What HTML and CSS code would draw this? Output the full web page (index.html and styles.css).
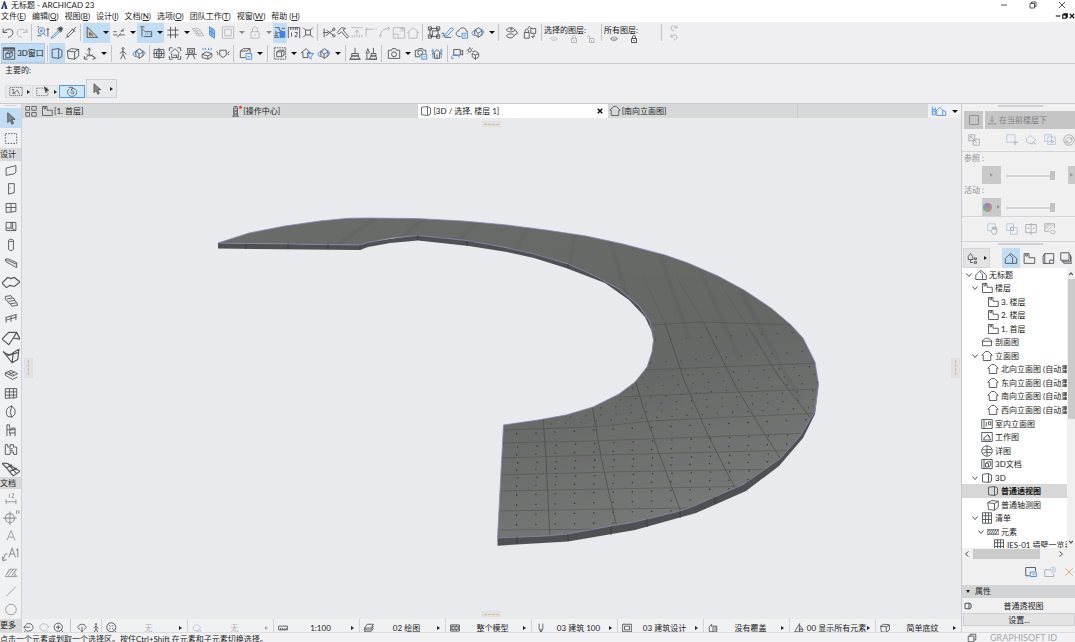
FILE: index.html
```html
<!DOCTYPE html>
<html lang="zh-CN">
<head>
<meta charset="utf-8">
<title>无标题 - ARCHICAD 23</title>
<link rel="stylesheet" href="styles.css">
</head>
<body>
<svg class="defs" aria-hidden="true">
<symbol id="logo" viewBox="0 0 16 16"><path d="M2 16 8 0l2 0 5 16h-5L8 6 6 16z" fill="#253a78" stroke="none"/></symbol>
<symbol id="undo" viewBox="0 0 16 16"><path d="M2 3v5h5M2 8c3-5 12-6 12 0 0 3-2 5-6 6"/></symbol>
<symbol id="redo" viewBox="0 0 16 16"><path d="M14 3v5H9M14 8C11 3 2 2 2 8c0 3 2 5 6 6"/></symbol>
<symbol id="find" viewBox="0 0 16 16"><circle class="b" cx="6" cy="6" r="4"/><circle cx="6" cy="6" r="1"/><path class="b" d="m9 9 2 3"/><path d="M1 1h2M1 12h5M14 13V3m-2 2 2-2 1 2"/></symbol>
<symbol id="dropper" viewBox="0 0 16 16"><path d="m9 3 4 4 2-4-2-2zM8 4l4 4" fill="#555"/><path class="b" d="m9 6-7 7-1 2 3-1 7-7"/></symbol>
<symbol id="syringe" viewBox="0 0 16 16"><path d="m9 3 4 4M11 5l3-4M4 14l8-8-2-2-7 7z"/><path class="b" d="m1 15 3-3"/></symbol>
<symbol id="setsquare" viewBox="0 0 16 16"><path d="M2 1v13h13zM5 8v3h4z" fill="#d9ba8c" fill-opacity=".6"/></symbol>
<symbol id="guides" viewBox="0 0 16 16"><path d="M1 11h5m3 0h6M6 14l4-5M11 7l3-4M1 7h4m5-1h4"/></symbol>
<symbol id="coords" viewBox="0 0 16 16"><path d="M1 1h5M3 1v12M5 13h10V7H7L4 4M7 10h1m2 0h1m2 0h1"/></symbol>
<symbol id="grid" viewBox="0 0 16 16"><path d="M5 1v14M11 1v14M1 5h14M1 11h14"/></symbol>
<symbol id="planes" viewBox="0 0 16 16"><path d="M1 3h8l6 9H7zM4 3l6 9M3 6h8M5 9h8"/></symbol>
<symbol id="bplane" viewBox="0 0 16 16"><path class="b" d="m5 1 6 4v10l-6-4zM8 3v10M5 6l6 4" fill="#9cc6f0"/></symbol>
<symbol id="frame" viewBox="0 0 16 16"><path d="M1 1h14v14H1zM4 4h8v8H4z"/></symbol>
<symbol id="lock" viewBox="0 0 16 16"><path d="M3 7h10v8H3zM5 7V4c0-4 6-4 6 0v3M8 10v2"/></symbol>
<symbol id="unlock" viewBox="0 0 16 16"><path d="M5 7h9v8H5zM5 7V4C5 0 1 1 1 4m8 6v3"/></symbol>
<symbol id="gravity" viewBox="0 0 16 16"><path d="M2 2h5v3l7 3M1 14h6M3 6v6M3 9l5-1"/><path d="M8 7h6v7H8z" class="bf"/><path d="M1 12h5M10 3h4"/></symbol>
<symbol id="ruler" viewBox="0 0 16 16"><path d="M1 15V2h14v13M4 2v3m3-3v3m3-3v3m2-3v3M5 8v5M9 8h3v2l-3 3h3"/></symbol>
<symbol id="cross" viewBox="0 0 16 16"><path d="M5 5h6v6H5zM2 2l3 3m6 0 3-3M2 14l3-3m6 0 3 3"/></symbol>
<symbol id="scissor" viewBox="0 0 16 16"><path d="M1 8h6M2 3v11M4 12l9-7M5 5l8 6"/><circle cx="14" cy="4" r="1.5"/><circle cx="14" cy="12" r="1.5"/></symbol>
<symbol id="hammer" viewBox="0 0 16 16"><path d="m1 8 5-6 5 1-3 2 7 8-2 2-7-8-3 3z"/></symbol>
<symbol id="level" viewBox="0 0 16 16"><path d="M1 2h14M8 14V5M5 8l3-3 3 3M2 14v-3m3 3v-3m6 3v-3m3 3v-3"/></symbol>
<symbol id="corner" viewBox="0 0 16 16"><path d="M2 13V4h10M1 4h2V2M14 4h1"/></symbol>
<symbol id="arc" viewBox="0 0 16 16"><path d="M2 14C2 7 6 3 13 3M11 1l3 2-3 3M1 12h3"/></symbol>
<symbol id="resize" viewBox="0 0 16 16"><path d="M1 2h14v13H1zM1 10h6v5M9 7l4-4M9 3h4v4"/></symbol>
<symbol id="house" viewBox="0 0 16 16"><path d="m1 8 7-6 7 6h-2v7H3V8z"/></symbol>
<symbol id="group" viewBox="0 0 16 16"><path d="M3 3h10v10H3zM6 6h7M6 6v7M1 1h4v4H1zM11 1h4v4h-4zM1 11h4v4H1zM11 11h4v4h-4z"/></symbol>
<symbol id="edit" viewBox="0 0 16 16"><path d="m4 11 8-9 3 2-8 8-4 1z" class="b"/><path d="M1 13c4-4 1-6-1-3m4 4h8"/></symbol>
<symbol id="cloud" viewBox="0 0 16 16"><path d="M6 13C-1 13 0 6 4 6c1-5 9-5 9 0 2 0 2 1 2 2"/><path class="b" d="M8 9h7v6H8zM10 12h3"/></symbol>
<symbol id="orbit" viewBox="0 0 16 16"><path d="m4 5 5-3 4 4v5l-5 3-4-4zM4 5l4 4v5m0-5 5-3"/><path class="b" d="M5 12C-2 11 0 5 7 5m4 6c7-2 4-7-1-7"/></symbol>
<symbol id="eyes" viewBox="0 0 16 16"><path d="M1 5c3-4 8-4 11 0-3 3-8 3-11 0M1 12c3-3 8-3 10 0-3 4-8 3-10 0m11-7 3 4-4 2"/><circle cx="7" cy="4" r="1"/></symbol>
<symbol id="locks" viewBox="0 0 16 16"><path d="M1 8h6v7H1zM2 8V6c0-3 4-3 4 0v2M9 3h6v6H9zM9 3c0-3-4-3-3 0m7 7v3h-3m2 2-2-2"/></symbol>
<symbol id="eye" viewBox="0 0 16 16"><path d="M1 7c3-4 11-4 14 0-3 6-11 6-14 0zM2 7c3 2 9 2 12 0"/></symbol>
<symbol id="win3d" viewBox="0 0 16 16"><path d="M1 1h14v14H1zM1 4h14M4 8l3-2h5v5l-3 2H4zM4 8h5v5M9 8l3-2"/><path d="M1 2h14" stroke-width="2"/></symbol>
<symbol id="persp" viewBox="0 0 16 16"><path d="m2 3 8-1v12l-8-1zM10 2l4 2v8l-4 2"/></symbol>
<symbol id="cube" viewBox="0 0 16 16"><path d="m1 5 5-3 9 1v8l-5 4-8-1zm0 0 9 1v9m0-9 5-3"/></symbol>
<symbol id="axes" viewBox="0 0 16 16"><path d="M7 2v7l-5 5m5-5 7 4M5 4l2-3 2 3M1 11v4h4m7-4 3 3-4 1M3 8c2 3 6 4 9 1"/></symbol>
<symbol id="walk" viewBox="0 0 16 16"><circle cx="8" cy="2" r="1.2"/><path d="M8 4v5l3 6M8 9l-3 6M8 5 4 8m4-3 4 4"/></symbol>
<symbol id="sect" viewBox="0 0 16 16"><path d="M2 3h12v10H2zM8 1v14M1 8h14M5 5h6v6H5z"/></symbol>
<symbol id="homebox" viewBox="0 0 16 16"><path d="M1 5V1h4m6 0h4v4m0 6v4h-4m-6 0H1v-4M2 8l6-6 6 6M4 8v5h8V8M6 10h4v3"/></symbol>
<symbol id="front" viewBox="0 0 16 16"><path d="M3 2h10M4 2v7h8V2M1 9h14M6 9l-3 6m7-6 3 6M6 4h4v3H6z"/></symbol>
<symbol id="sunbox" viewBox="0 0 16 16"><path class="b" d="M3 1v3m3-3v3m4-3v3m3-3v3"/><path d="m2 9 5-3 7 2-5 3zM2 9v4l7 2 5-3V8M9 11v4"/></symbol>
<symbol id="sides" viewBox="0 0 16 16"><path d="M4 4h8v6l-4 3-4-3zM0 5l2 3-1 2m15-5-2 3 1 2"/></symbol>
<symbol id="savebox" viewBox="0 0 16 16"><path d="m1 5 4-3h8v5M1 5v8h6M1 5h8l4-3"/><path class="b" d="M8 8h7v7H8zM10 12h3"/></symbol>
<symbol id="marqbox" viewBox="0 0 16 16"><path d="M1 1h14v14H1z" stroke-dasharray="2 1"/><path d="m4 6 3-2h6v6l-3 2H4zm0 0h6v6m0-6 3-2"/></symbol>
<symbol id="filter" viewBox="0 0 16 16"><path d="m1 7 6-5 5 5H9v6H3V7z"/><path class="b" d="M8 8h8l-3 4v3l-2-2z"/></symbol>
<symbol id="brush" viewBox="0 0 16 16"><path d="M8 1v7M4 8h8v3H4zM2 15l2-4h8l2 4zM1 15h14"/></symbol>
<symbol id="brushes" viewBox="0 0 16 16"><path d="M11 1v7M8 8h6v3H8zM6 15l2-4h6l1 4zM4 2l2 5-4 1zM1 15h14M3 9v6"/></symbol>
<symbol id="camera" viewBox="0 0 16 16"><path d="M1 4h4l1-2h4l1 2h4v10H1z"/><circle cx="8" cy="9" r="3"/></symbol>
<symbol id="camsave" viewBox="0 0 16 16"><path d="M7 12H1V4h3l1-2h5l1 2h3v4"/><circle cx="7" cy="7" r="3"/><path class="b" d="M9 9h6v6H9zM11 12h2"/></symbol>
<symbol id="bhouse" viewBox="0 0 16 16"><path class="b" d="M3 2v12M13 2v12M1 5h2m10 0h2"/><path d="m2 9 6-6 6 6M5 7v7h6V7M8 9v5"/></symbol>
<symbol id="video" viewBox="0 0 16 16"><path d="M4 3h8v7H4zM12 6l3-2v6l-3-2"/><path class="b" d="M1 13c0-4 9-4 10 0M1 14h3"/></symbol>
<symbol id="sunobj" viewBox="0 0 16 16"><circle cx="4" cy="4" r="2"/><path d="M4 0v1M0 4h1M8 1 7 2M1 8l1-1m5-1 4-1 4 3v4l-4 3-4-3V8l4 2 4-2m-4 2v5"/></symbol>
<symbol id="arrow" viewBox="0 0 16 16"><path d="M4 1v12l3-3 2 5 2-1-2-5h4z" fill="#888"/></symbol>
<symbol id="marq" viewBox="0 0 16 16"><path d="M1 2h14v12H1z" stroke-dasharray="2 1.5"/></symbol>
<symbol id="marqsel" viewBox="0 0 20 16"><path d="M1 3h16v11H1z" stroke-dasharray="2 1.5"/><path d="m12 1 6 5-3 1-1 3z" fill="#333"/></symbol>
<symbol id="infosel" viewBox="0 0 20 16"><path d="M1 2h18v12H1z" stroke-dasharray="2 1"/><path d="M6 5v6l6-5 3 6M5 11h4M4 5h3"/></symbol>
<symbol id="magnet" viewBox="0 0 16 16"><path d="M4 4c-5 4-2 11 4 11s9-6 5-10c-3-3-8 0-5 2l3 2c1 3-5 3-5-1M3 2l6 0-2 4"/></symbol>
<symbol id="quad" viewBox="0 0 16 16"><path d="M1 2h5v5H1zM9 2h6v5H9zM1 10h5v5H1zM9 10h6v5H9z"/></symbol>
<symbol id="plan" viewBox="0 0 16 16"><path d="M2 14V2h6v5h7v7zM4 2v3h2V2"/></symbol>
<symbol id="tower" viewBox="0 0 16 16"><path d="M4 4h7M5 2h5M5 4v11m5-11v11M3 15h9M5 6l5 4-5 4M10 6l-5 4 5 4"/><circle cx="14" cy="3" r="2" fill="#f04423" stroke="none"/></symbol>
<symbol id="elev" viewBox="0 0 16 16"><path d="M3 14V7H1l5-5h4l5 5h-2v7z"/></symbol>
<symbol id="bhouses" viewBox="0 0 20 16"><path class="b" d="M1 2v11h4V3M1 6h4M1 9h4M6 8l5-5 4 4v7H7V8m8-1 4 2v5h-4"/></symbol>
<symbol id="wall" viewBox="0 0 16 16"><path d="M2 5 14 2v8l-2 2-10 2z"/></symbol>
<symbol id="door" viewBox="0 0 16 16"><path d="M5 2h7v11l-7 2zM7 7v1"/></symbol>
<symbol id="window" viewBox="0 0 16 16"><path d="M2 3h12v10l-12 1zM8 3v11M2 8h12"/></symbol>
<symbol id="cornerwin" viewBox="0 0 16 16"><path d="M2 3h12v10H2zM8 3v7l6 3M2 10h6M10 3v7"/></symbol>
<symbol id="column" viewBox="0 0 16 16"><path d="M5 3v11c2 2 4 2 6 0V3M5 3c1-2 5-2 6 0-1 2-5 2-6 0"/></symbol>
<symbol id="beam" viewBox="0 0 16 16"><path d="m1 3 14 6v4L2 6zM1 3l3-1 11 5v2"/></symbol>
<symbol id="slab" viewBox="0 0 16 16"><path d="m0 9 5-5 3 1 3-1 5 4-5 4-4-1-3 2z"/></symbol>
<symbol id="stair" viewBox="0 0 16 16"><path d="m1 3 7-1 2 3 2 1 1 3 2 1 1 4-7 1-2-3-2-1-2-3-2-1zM3 6l7-1M5 9l7-1m-5 4 7-1"/></symbol>
<symbol id="rail" viewBox="0 0 16 16"><path d="M1 7l14-4M2 10l13-4M2 7v6m6-8v7m6-9v7"/></symbol>
<symbol id="roof" viewBox="0 0 16 16"><path d="m0 9 6-6h7l3 6-6-1-4 6zM13 3l-3 5"/></symbol>
<symbol id="shell" viewBox="0 0 16 16"><path d="M1 4c3 3 7 4 9 1l5-3-1 9-5 3zM9 14l1-9M4 8l10-3"/></symbol>
<symbol id="skylight" viewBox="0 0 16 16"><path d="m1 6 7-3 8 4-6 3zM1 9l9 5 6-3M4 4l8 5m-7-1 7-3M1 6v3"/></symbol>
<symbol id="curtain" viewBox="0 0 16 16"><path d="M1 2h14v11l-14 1zM6 2v12m5-12v12M1 6h14M1 10h14"/></symbol>
<symbol id="morph" viewBox="0 0 16 16"><path d="M7 2C2 3 1 10 4 14l5 1 4-4V6L9 1zM9 1 7 9l2 6"/></symbol>
<symbol id="chair" viewBox="0 0 16 16"><path d="M3 1h3l1 6H3zM3 7v8m4-8h6v4H6zM13 11v4M7 11v4M9 7V5h4v2"/></symbol>
<symbol id="zone" viewBox="0 0 16 16"><path d="M1 2h3v3h3V2h4v3h4v9h-4v-3h-4v3H1zM6 7h4M6 9h4"/></symbol>
<symbol id="mesh" viewBox="0 0 16 16"><path d="M0 4c4-1 6 0 8 2l8 5-6 4c-3-3-6-8-10-11M4 8l5-3m-2 6 6-3M5 4l8 9"/></symbol>
<symbol id="dim" viewBox="0 0 16 16"><path d="M1 12h14M2 9v6M14 9v6M6 2v5M9 2h2v2L9 7h3"/></symbol>
<symbol id="leveldim" viewBox="0 0 16 16"><circle cx="7" cy="9" r="4"/><path d="M7 3v12M1 9h12M13 2v3M15 2v3"/></symbol>
<symbol id="text" viewBox="0 0 16 16"><path d="M3 14 8 2l5 12M5 10h6"/></symbol>
<symbol id="labelt" viewBox="0 0 16 16"><path d="m1 13 2-5h2M0 10l1 4 3-1M6 11l3-8 3 8M7 8h4M14 3v8M13 5l1-2"/></symbol>
<symbol id="hatch" viewBox="0 0 16 16"><path d="m1 13 5-9h9l-3 4 3 5zM4 13l7-9M8 13l6-8M2 11l6-7M11 13l2-3"/></symbol>
<symbol id="line" viewBox="0 0 16 16"><path d="M2 14 14 2"/></symbol>
<symbol id="circle" viewBox="0 0 16 16"><circle cx="8" cy="8" r="6.5"/></symbol>
<symbol id="square" viewBox="0 0 16 16"><path d="M2 2h12v12H2z"/></symbol>
<symbol id="below" viewBox="0 0 16 16"><path d="M8 1v10M5 8l3 3 3-3M1 14h14"/></symbol>
<symbol id="swap" viewBox="0 0 16 16"><path d="M1 1h8v8H1zM7 7h8v8H7zM3 3l9 9M3 6V3h3"/></symbol>
<symbol id="move" viewBox="0 0 16 16"><path d="M9 11H1V1h11v6" class="b"/><path d="M12 8v7M9 11h7"/></symbol>
<symbol id="rotate" viewBox="0 0 16 16"><path class="b" d="m2 6 5-4 7 5-5 6-7-2z"/><path d="M12 10l2 4M7 13h4"/></symbol>
<symbol id="copy" viewBox="0 0 16 16"><path class="b" d="M1 1h9v9H1zM5 4h10v10H5z"/><path d="m9 8 4 2-4 2"/></symbol>
<symbol id="refresh" viewBox="0 0 16 16"><circle cx="8" cy="8" r="7"/><path d="M4 9c0-5 6-6 8-2M12 4v3H9m3 1c0 5-6 5-8 2m0 3v-3h3"/></symbol>
<symbol id="hand" viewBox="0 0 16 16"><path class="b" d="M5 10H1V1h10v3"/><path d="M7 9V6h2v3-4h2v4-3h2v6l-2 3H8l-3-4z"/></symbol>
<symbol id="twosq" viewBox="0 0 16 16"><path class="b" d="M1 1h9v9H1zM6 6h9v9H6z"/><path d="M6 6h4v4H6z"/></symbol>
<symbol id="split" viewBox="0 0 16 16"><path d="M1 2h14v11H1zM8 0v16M3 7h3m4 0h3"/></symbol>
<symbol id="veil" viewBox="0 0 16 16"><path d="M7 11H1V1h13v6M2 8l7-7M2 5l4-4m0 8 7-7M8 12c2-3 6-3 7 0-1 3-5 3-7 0"/></symbol>
<symbol id="mapnav" viewBox="0 0 16 16"><path d="M3 6l3-4 3 4v4H3zM6 10v4h3M11 8h3v2h-3zM11 13h3v2h-3z"/></symbol>
<symbol id="houses" viewBox="0 0 16 16"><path d="M1 14V8l5-5 4 4v7zM6 3l2-1 7 6v6h-5"/></symbol>
<symbol id="layout" viewBox="0 0 16 16"><path d="M4 2h11v12H4zM4 2 2 5v9h4M10 14v-4h5"/></symbol>
<symbol id="books" viewBox="0 0 16 16"><path d="M1 1h11v10H1zM3 11v2h11V4h-2M5 13v2h11V7h-2"/></symbol>
<symbol id="section" viewBox="0 0 16 16"><path d="M2 13V6l4-3h4l4 3v7zM1 7h14"/></symbol>
<symbol id="interior" viewBox="0 0 16 16"><path d="M1 2h14v12H1zM4 2v12M7 5v6M10 5h3v4h-3z"/></symbol>
<symbol id="worksheet" viewBox="0 0 16 16"><path d="M1 2h14v12H1zM4 12V9l5-4 3 3M3 12h10M9 5l4 7"/></symbol>
<symbol id="detail" viewBox="0 0 16 16"><circle cx="8" cy="8" r="7"/><path d="M8 1v14M8 6h6M8 10h6M2 6l6 1M3 11l5-2"/></symbol>
<symbol id="doc3d" viewBox="0 0 16 16"><path d="M1 2h14v12H1zM4 2v12M6 7l3-2h4v5l-3 2H6zm0 0h4v5"/></symbol>
<symbol id="schedule" viewBox="0 0 16 16"><path d="M2 1h12v14H2zM6 1v14m4-14v14M2 5h12M2 10h12"/></symbol>
<symbol id="elements" viewBox="0 0 16 16"><path d="M0 5h16v6H0zM2 11l4-6m-1 6 4-6m-1 6 4-6m-1 6 4-6M1 8l2-3"/></symbol>
<symbol id="savev" viewBox="0 0 16 16"><path d="M6 13H1V2h13v5"/><path class="b" d="M7 8h8v6H7zM10 11h3"/></symbol>
<symbol id="newf" viewBox="0 0 16 16"><path d="M1 5h7M1 5v9h12v-4"/><circle class="b" cx="12" cy="5" r="3.5"/><path class="b" d="M12 3v4m-2-2h4"/></symbol>
<symbol id="x" viewBox="0 0 16 16"><path d="m2 2 12 12M14 2 2 14"/></symbol>
<symbol id="min" viewBox="0 0 16 16"><path d="M2 8h12"/></symbol>
<symbol id="restore" viewBox="0 0 16 16"><path d="M2 5h9v9H2zM5 5V2h9v9h-3"/></symbol>
<symbol id="chev" viewBox="0 0 16 16"><path d="m3 5 5 6 5-6"/></symbol>
<symbol id="zoomin" viewBox="0 0 16 16"><circle cx="7" cy="7" r="5.5"/><path d="M7 4v6M4 7h6m1 4 4 4"/></symbol>
<symbol id="prevz" viewBox="0 0 16 16"><path d="M4 3c9-4 13 7 5 9-3 1-6-1-7-3M4 7H1l3-3M4 7h5M3 12l-2 3"/></symbol>
<symbol id="nextz" viewBox="0 0 16 16"><path d="M12 4C3-2-1 10 6 12c3 1 5-1 6-3M12 7h3l-3-3m0 8 3 3"/></symbol>
<symbol id="orb" viewBox="0 0 16 16"><path d="M5 10C-2 8 3 2 8 2s10 6 3 8M8 6v8m-2-2 2 2 2-2"/></symbol>
<symbol id="fit" viewBox="0 0 16 16"><circle cx="7" cy="7" r="6"/><path d="M4 4l2 2m4-2L8 6m-4 4 2-2m4 2L8 8m3 3 4 4"/></symbol>
<symbol id="scale" viewBox="0 0 16 16"><path d="M1 5h14v6H1zM4 11V8m3 3V8m3 3V8m3 3V8"/></symbol>
<symbol id="layers" viewBox="0 0 16 16"><path d="M5 2h10l-4 6H1zM1 8v3h10l4-6M1 11v3h10l4-6"/></symbol>
<symbol id="struct" viewBox="0 0 16 16"><path d="M1 3h14v10H1zM1 6h14M1 10h14M5 3v3m5-3v3M3 6v4m5-4v4m5-4v4M5 10v3m5-3v3"/></symbol>
<symbol id="pen" viewBox="0 0 16 16"><path d="M5 1v8l3 6 3-6V1M8 9v6"/></symbol>
<symbol id="mvo" viewBox="0 0 16 16"><path d="M1 2h14v12H1zM4 5h8v6H4z"/></symbol>
<symbol id="override" viewBox="0 0 16 16"><path d="M2 6l4-4v4M2 6v8h6M8 5h6v9H8zM10 8h3M10 11h3"/></symbol>
<symbol id="reno" viewBox="0 0 16 16"><path d="M1 14 9 1v13M7 10h7v4H1M10 5l4 5"/></symbol>
</svg>

<header class="titlebar">
  <svg class="ic s10"><use href="#logo"/></svg>
  <h1>无标题 - ARCHICAD 23</h1>
  <div class="wincontrols">
    <button aria-label="最小化"><svg class="ic s8"><use href="#min"/></svg></button>
    <button aria-label="还原"><svg class="ic s8"><use href="#restore"/></svg></button>
    <button aria-label="关闭"><svg class="ic s8"><use href="#x"/></svg></button>
  </div>
</header>
<nav class="menubar">
  <button>文件(<u>E</u>)</button><button>编辑(<u>Q</u>)</button><button>视图(<u>B</u>)</button><button>设计(<u>I</u>)</button><button>文档(<u>N</u>)</button><button>选项(<u>O</u>)</button><button>团队工作(<u>T</u>)</button><button>视窗(<u>W</u>)</button><button>帮助 (<u>H</u>)</button>
  <div class="doccontrols"><button aria-label="最小化文档"><svg class="ic s6"><use href="#min"/></svg></button><button aria-label="还原文档"><svg class="ic s6"><use href="#restore"/></svg></button><button aria-label="关闭文档"><svg class="ic s6"><use href="#x"/></svg></button></div>
</nav>

<div class="toolbar row1" role="toolbar" aria-label="标准">
  <button aria-label="撤销"><svg class="ic"><use href="#undo"/></svg></button>
  <button aria-label="重做" class="off"><svg class="ic"><use href="#redo"/></svg></button>
  <i class="sep"></i>
  <button aria-label="查找"><svg class="ic"><use href="#find"/></svg></button>
  <button aria-label="吸取参数"><svg class="ic"><use href="#dropper"/></svg></button>
  <button aria-label="注入参数"><svg class="ic"><use href="#syringe"/></svg></button>
  <i class="sep tight"></i>
  <button aria-label="三角板" class="drop on"><svg class="ic"><use href="#setsquare"/></svg></button>
  <button aria-label="辅助线" class="drop"><svg class="ic"><use href="#guides"/></svg></button>
  <button aria-label="坐标" class="drop on"><svg class="ic"><use href="#coords"/></svg></button>
  <button aria-label="网格" class="drop"><svg class="ic"><use href="#grid"/></svg></button>
  <button aria-label="编辑平面" class="off"><svg class="ic"><use href="#planes"/></svg></button>
  <button aria-label="垂直平面"><svg class="ic"><use href="#bplane"/></svg></button>
  <button aria-label="边框" class="drop off"><svg class="ic"><use href="#frame"/></svg></button>
  <button aria-label="锁定" class="drop off"><svg class="ic"><use href="#lock"/></svg></button>
  <button aria-label="重力" class="on"><svg class="ic"><use href="#gravity"/></svg></button>
  <button aria-label="测量"><svg class="ic"><use href="#ruler"/></svg></button>
  <button aria-label="交点"><svg class="ic"><use href="#cross"/></svg></button>
  <i class="sep"></i>
  <button aria-label="剪裁"><svg class="ic"><use href="#scissor"/></svg></button>
  <button aria-label="调整"><svg class="ic"><use href="#hammer"/></svg></button>
  <button aria-label="标高" class="off"><svg class="ic"><use href="#level"/></svg></button>
  <button aria-label="相交" class="off"><svg class="ic"><use href="#corner"/></svg></button>
  <button aria-label="圆角" class="off"><svg class="ic"><use href="#arc"/></svg></button>
  <button aria-label="缩放" class="off"><svg class="ic"><use href="#resize"/></svg></button>
  <button aria-label="屋顶" class="off"><svg class="ic"><use href="#house"/></svg></button>
  <i class="sep"></i>
  <button aria-label="分组"><svg class="ic"><use href="#group"/></svg></button>
  <button aria-label="编辑"><svg class="ic"><use href="#edit"/></svg></button>
  <button aria-label="云"><svg class="ic"><use href="#cloud"/></svg></button>
  <button aria-label="旋转视图" class="drop"><svg class="ic"><use href="#orbit"/></svg></button>
  <i class="sep"></i>
  <button aria-label="显示切换" class="wide"><svg class="ic"><use href="#eyes"/></svg></button>
  <button aria-label="锁定切换" class="wide"><svg class="ic"><use href="#locks"/></svg></button>
  <i class="sep tight"></i>
  <div class="layers"><span>选择的图层:</span><div>
    <button aria-label="隐藏所选" class="off"><svg class="ic"><use href="#eye"/></svg></button><button aria-label="锁定所选" class="off"><svg class="ic s8"><use href="#lock"/></svg></button><button aria-label="解锁所选" class="off"><svg class="ic s8"><use href="#unlock"/></svg></button></div></div>
  <i class="sep tight"></i>
  <div class="layers"><span>所有图层:</span><div>
    <button aria-label="显示全部"><svg class="ic"><use href="#eye"/></svg></button><button aria-label="锁定全部"><svg class="ic s8"><use href="#lock"/></svg></button></div></div>
  <i class="sep"></i>
  <div class="stack"><button aria-label="重做图层" class="off"><svg class="ic s8"><use href="#redo"/></svg></button><button aria-label="撤销图层" class="off"><svg class="ic s8"><use href="#undo"/></svg></button></div>
</div>
<div class="toolbar row2" role="toolbar" aria-label="三维">
  <button class="on labelled"><svg class="ic"><use href="#win3d"/></svg>3D窗口</button>
  <i class="sep tiny"></i>
  <button aria-label="透视" class="on"><svg class="ic"><use href="#persp"/></svg></button>
  <button aria-label="轴测"><svg class="ic"><use href="#cube"/></svg></button>
  <button aria-label="投影" class="drop"><svg class="ic"><use href="#axes"/></svg></button>
  <i class="sep"></i>
  <button aria-label="漫游"><svg class="ic"><use href="#walk"/></svg></button>
  <button aria-label="环绕"><svg class="ic"><use href="#orbit"/></svg></button>
  <i class="sep tiny"></i>
  <button aria-label="剖切"><svg class="ic"><use href="#sect"/></svg></button>
  <button aria-label="视图框"><svg class="ic"><use href="#homebox"/></svg></button>
  <button aria-label="正视"><svg class="ic"><use href="#front"/></svg></button>
  <button aria-label="阳光"><svg class="ic"><use href="#sunbox"/></svg></button>
  <button aria-label="侧视"><svg class="ic"><use href="#sides"/></svg></button>
  <i class="sep"></i>
  <button aria-label="保存视图" class="drop"><svg class="ic"><use href="#savebox"/></svg></button>
  <i class="sep"></i>
  <button aria-label="选取框" class="drop"><svg class="ic"><use href="#marqbox"/></svg></button>
  <button aria-label="过滤"><svg class="ic"><use href="#filter"/></svg></button>
  <button aria-label="三维剖切" class="drop"><svg class="ic"><use href="#orbit"/></svg></button>
  <i class="sep tiny"></i>
  <button aria-label="样式"><svg class="ic"><use href="#brush"/></svg></button>
  <button aria-label="表面"><svg class="ic"><use href="#brushes"/></svg></button>
  <i class="sep"></i>
  <button aria-label="渲染" class="drop"><svg class="ic"><use href="#camera"/></svg></button>
  <button aria-label="保存渲染"><svg class="ic"><use href="#camsave"/></svg></button>
  <button aria-label="建筑"><svg class="ic"><use href="#bhouse"/></svg></button>
  <i class="sep tiny"></i>
  <button aria-label="飞行"><svg class="ic"><use href="#video"/></svg></button>
  <button aria-label="日照"><svg class="ic"><use href="#sunobj"/></svg></button>
</div>
<section class="infobar">
  <span>主要的:</span>
  <div class="infobtns">
    <button class="more" aria-label="元素选择"><svg class="ic i20"><use href="#infosel"/></svg></button>
    <button class="more" aria-label="选取方式"><svg class="ic i20"><use href="#marqsel"/></svg></button>
    <button class="picked" aria-label="磁性"><svg class="ic"><use href="#magnet"/></svg></button>
    <button class="more tall" aria-label="箭头"><svg class="ic"><use href="#arrow"/></svg></button>
  </div>
</section>

<main class="work">
  <aside class="toolbox">
    <div class="grip"></div>
    <div class="tools two"><button class="on" aria-label="箭头"><svg class="ic"><use href="#arrow"/></svg></button><button aria-label="选取框"><svg class="ic"><use href="#marq"/></svg></button></div>
    <h2>设计</h2>
    <div class="tools">
      <button aria-label="墙"><svg class="ic"><use href="#wall"/></svg></button><button aria-label="门"><svg class="ic"><use href="#door"/></svg></button><button aria-label="窗"><svg class="ic"><use href="#window"/></svg></button><button aria-label="角窗"><svg class="ic"><use href="#cornerwin"/></svg></button><button aria-label="柱"><svg class="ic"><use href="#column"/></svg></button><button aria-label="梁"><svg class="ic"><use href="#beam"/></svg></button><button aria-label="板"><svg class="ic s18"><use href="#slab"/></svg></button><button aria-label="楼梯"><svg class="ic"><use href="#stair"/></svg></button><button aria-label="栏杆"><svg class="ic"><use href="#rail"/></svg></button><button aria-label="屋顶"><svg class="ic s18"><use href="#roof"/></svg></button><button aria-label="壳体"><svg class="ic s18"><use href="#shell"/></svg></button><button aria-label="天窗"><svg class="ic"><use href="#skylight"/></svg></button><button aria-label="幕墙"><svg class="ic"><use href="#curtain"/></svg></button><button aria-label="变形体"><svg class="ic"><use href="#morph"/></svg></button><button aria-label="对象"><svg class="ic"><use href="#chair"/></svg></button><button aria-label="区域"><svg class="ic"><use href="#zone"/></svg></button><button aria-label="网面"><svg class="ic s18"><use href="#mesh"/></svg></button>
    </div>
    <h2>文档</h2>
    <div class="tools docs">
      <button aria-label="尺寸"><svg class="ic"><use href="#dim"/></svg></button><button aria-label="标高尺寸"><svg class="ic s18"><use href="#leveldim"/></svg></button><button aria-label="文本"><svg class="ic"><use href="#text"/></svg></button><button aria-label="标签"><svg class="ic s18"><use href="#labelt"/></svg></button><button aria-label="填充"><svg class="ic"><use href="#hatch"/></svg></button><button aria-label="线"><svg class="ic"><use href="#line"/></svg></button><button aria-label="圆"><svg class="ic"><use href="#circle"/></svg></button>
    </div>
    <h2>更多</h2>
  </aside>

  <section class="center">
    <div class="tabs" role="tablist">
      <button aria-label="标签总览"><svg class="ic"><use href="#quad"/></svg></button>
      <button role="tab" class="tab"><svg class="ic"><use href="#plan"/></svg>[1. 首层]</button>
      <button role="tab" class="tab"><svg class="ic"><use href="#tower"/></svg>[操作中心]</button>
      <div class="tab current"><button role="tab" aria-selected="true"><svg class="ic"><use href="#persp"/></svg>[3D / 选择, 楼层 1]</button><button aria-label="关闭标签"><svg class="ic s6"><use href="#x"/></svg></button></div>
      <button role="tab" class="tab"><svg class="ic"><use href="#elev"/></svg>[南向立面图]</button>
      <span class="spare"></span>
      <button class="drop end" aria-label="视图列表"><svg class="ic i20"><use href="#bhouses"/></svg></button>
    </div>
    <div class="canvas">
      <svg class="model" viewBox="22 118 939 501" role="img" aria-label="环形楼板模型">
        <defs>
          <path id="top" d="M218 243 249 233 285 226 320 221 348 218.300 368 218 416 218.500 463 221 507 225 546 230 586 236 623 244 665 255 688 263 718 276 744 290 771 308 791 325 803 338 815 362 818.500 384 815 411 801 435 781 458 744 484 694 506 680 511 635 522 611 526 568 534 546 536 497.500 538 503.500 425 538 420 566 415 593 407 619 394 635 382 647 367 652 352 653.500 340 650 322 639 306 619 289 595 276 568 264 534 254 503 247 467 240.500 418 235.500 392 238 366 243 360 245z"/>
          <clipPath id="topclip"><use href="#top"/></clipPath>
          <linearGradient id="shade" x1="0" y1="0" x2=".6" y2="1"><stop offset="0" stop-color="#6a6c6a"/><stop offset=".4" stop-color="#676967"/><stop offset=".65" stop-color="#656866"/><stop offset="1" stop-color="#757876"/></linearGradient>
        </defs>
        <path d="M218 243 360 245 368 242 418 235 467 240 534 253 568 264 595 275 619 289 639 306 650 322 654 340 653 334 645 317 629 300 605 283 566 268 534 258 507 252 469 246 418 240.500 390 243 368 247 360 250 218 248.500z" fill="#4f5052"/>
        <path d="M497.500 537 568 533 635 521 694 505 744 483 781 457 801 434 815 410 818.500 384 818 390 815 414 803 438 779 466 746 491 696 513 635 530 568 541.500 497.500 545.700z" fill="#4f5052"/>
        <use href="#top" fill="url(#shade)"/>
        <g clip-path="url(#topclip)" fill="none">
          <g stroke="#505350" stroke-width="4" opacity=".16"><path d="M380 215 330 250M430 215 390 245M480 220 455 243M530 225 515 250M575 232 570 265M610 240 628 300M660 255 690 340M700 270 740 360M740 290 800 400"/></g>
          <g stroke="#484c48" opacity=".7"><path d="M543 418 546 458 550 538M592 405 601 457 609 493 618 532M635 380 645 413 659 453 681 512M665 323 684 380 708 435 736 490M704 323 736 387 762 430 783 462M752 333 779 377 812 420"/>
          <path d="M643 277 665 323M677 278 704 323M724 290 752 333" opacity=".4"/>
          <path d="M500 430 593 427 650 421 820 413M500 458 600 455 800 450M500 475 610 472 780 469M500 491 610 489 760 486M500 511 610 509 700 508M500 530 620 529M500 443 593 441 810 433M620 397 710 393 820 389M640 370 720 367 820 363M650 325 700 322 800 325" opacity=".6"/></g>
          <g stroke="#343a3b" stroke-width="1.300" stroke-dasharray="1.300 18"><path d="M516 434 820 419M517 447 810 434M516 455 810 443M517 463 800 453M516 470 790 461M517 478 780 470M516 486 770 479M516 495 750 488M516 505 730 499M516 515 700 510M516 525 650 522"/></g>
          <g stroke="#3c4242" stroke-width="1.200" stroke-dasharray="1.200 14"><path d="M550 424 820 407M570 417 820 399M600 408 820 390M620 400 820 382M632 388 820 374M642 378 820 366M650 363 820 350M655 340 800 332"/></g>
        </g>
        <use href="#top" fill="none" stroke="#8586b4" stroke-width=".8"/>
        <path d="M360 245v5M288 244v5M246 244v5M328 244v5M568 534v7M611 527v8M647 519v8M680 511v7M517 537v7M715 497v7M418 235v5M467 241v5M568 264v4" stroke="#333638" fill="none" stroke-width=".8"/>
      </svg>
      <i class="handle top"></i><i class="handle bottom"></i><i class="handle left"></i><i class="handle right"></i>
    </div>
    <div class="quickbar">
      <div class="nav">
        <button aria-label="上一缩放"><svg class="ic s12"><use href="#prevz"/></svg></button><button class="off" aria-label="下一缩放"><svg class="ic s12"><use href="#nextz"/></svg></button><button aria-label="放大"><svg class="ic s12"><use href="#zoomin"/></svg></button><i class="sep tiny"></i><button aria-label="环绕"><svg class="ic s10"><use href="#orb"/></svg></button><button aria-label="行走"><svg class="ic s10"><use href="#walk"/></svg></button>
      </div>
      <div class="options">
        <button><svg class="ic s12"><use href="#fit"/></svg><span class="off">无</span></button>
        <button class="off"><svg class="ic s10"><use href="#rotate"/></svg><span>无</span></button>
        <button><svg class="ic s10"><use href="#scale"/></svg><span>1:100</span></button>
        <button><svg class="ic s10"><use href="#layers"/></svg><span>02 绘图</span></button>
        <button><svg class="ic s10"><use href="#struct"/></svg><span>整个模型</span></button>
        <button><svg class="ic s10"><use href="#pen"/></svg><span>03 建筑 100</span></button>
        <button><svg class="ic s10"><use href="#mvo"/></svg><span>03 建筑设计</span></button>
        <button><svg class="ic s10"><use href="#override"/></svg><span>没有覆盖</span></button>
        <button><svg class="ic s10"><use href="#reno"/></svg><span>00 显示所有元素</span></button>
        <button><svg class="ic s10"><use href="#cube"/></svg><span>简单底纹</span></button>
      </div>
    </div>
  </section>

  <aside class="panel">
    <div class="grab"></div>
    <div class="trace">
      <button aria-label="描绘"><svg class="ic s12"><use href="#square"/></svg></button>
      <button class="ref"><svg class="ic s10"><use href="#below"/></svg>在当前楼层下</button>
    </div>
    <div class="icons off five">
      <button aria-label="交换"><svg class="ic s12"><use href="#swap"/></svg></button><span></span><button aria-label="移动"><svg class="ic s12"><use href="#move"/></svg></button><button aria-label="旋转"><svg class="ic s12"><use href="#rotate"/></svg></button><button aria-label="复制"><svg class="ic s12"><use href="#copy"/></svg></button><button aria-label="刷新"><svg class="ic s12"><use href="#refresh"/></svg></button>
    </div>
    <label for="refr">参照 :</label>
    <div class="slide"><button class="swatch" aria-label="参照颜色"></button><input id="refr" type="range" value="100"><button class="swatch edge" aria-label="参照更多"></button></div>
    <label for="act">活动 :</label>
    <div class="slide"><button class="swatch" aria-label="活动颜色"><i class="wheel"></i></button><input id="act" type="range" value="100"></div>
    <div class="icons off four">
      <span></span><button aria-label="拖移"><svg class="ic s12"><use href="#hand"/></svg></button><button aria-label="重叠"><svg class="ic s12"><use href="#twosq"/></svg></button><button aria-label="分割"><svg class="ic s12"><use href="#split"/></svg></button><button aria-label="遮罩"><svg class="ic s12"><use href="#veil"/></svg></button><span></span>
    </div>
    <div class="grab second"></div>
    <div class="maptabs">
      <button class="project more" aria-label="项目选择"><svg class="ic s12"><use href="#mapnav"/></svg></button>
      <button class="on" aria-label="项目图"><svg class="ic"><use href="#houses"/></svg></button><button aria-label="视图映射"><svg class="ic"><use href="#plan"/></svg></button><button aria-label="图册"><svg class="ic"><use href="#layout"/></svg></button><button aria-label="发布器"><svg class="ic s12"><use href="#books"/></svg></button>
    </div>
    <div class="treebox">
      <ul class="tree">
        <li><svg class="ic s8"><use href="#chev"/></svg><svg class="ic s12"><use href="#houses"/></svg>无标题</li>
        <li class="l1"><svg class="ic s8"><use href="#chev"/></svg><svg class="ic s12"><use href="#plan"/></svg>楼层</li>
        <li class="l2 leaf"><svg class="ic s12"><use href="#plan"/></svg>3. 楼层</li>
        <li class="l2 leaf"><svg class="ic s12"><use href="#plan"/></svg>2. 楼层</li>
        <li class="l2 leaf"><svg class="ic s12"><use href="#plan"/></svg>1. 首层</li>
        <li class="l1 leaf"><svg class="ic s12"><use href="#section"/></svg>剖面图</li>
        <li class="l1"><svg class="ic s8"><use href="#chev"/></svg><svg class="ic s12"><use href="#elev"/></svg>立面图</li>
        <li class="l2 leaf"><svg class="ic s12"><use href="#elev"/></svg>北向立面图 (自动重建模型)</li>
        <li class="l2 leaf"><svg class="ic s12"><use href="#elev"/></svg>东向立面图 (自动重建模型)</li>
        <li class="l2 leaf"><svg class="ic s12"><use href="#elev"/></svg>南向立面图 (自动重建模型)</li>
        <li class="l2 leaf"><svg class="ic s12"><use href="#elev"/></svg>西向立面图 (自动重建模型)</li>
        <li class="l1 leaf"><svg class="ic s12"><use href="#interior"/></svg>室内立面图</li>
        <li class="l1 leaf"><svg class="ic s12"><use href="#worksheet"/></svg>工作图</li>
        <li class="l1 leaf"><svg class="ic s12"><use href="#detail"/></svg>详图</li>
        <li class="l1 leaf"><svg class="ic s12"><use href="#doc3d"/></svg>3D文档</li>
        <li class="l1"><svg class="ic s8"><use href="#chev"/></svg><svg class="ic s12"><use href="#persp"/></svg>3D</li>
        <li class="l2 leaf selected"><svg class="ic s12"><use href="#persp"/></svg>普通透视图</li>
        <li class="l2 leaf"><svg class="ic s12"><use href="#cube"/></svg>普通轴测图</li>
        <li class="l1"><svg class="ic s8"><use href="#chev"/></svg><svg class="ic s12"><use href="#schedule"/></svg>清单</li>
        <li class="l1 inner"><svg class="ic s8"><use href="#chev"/></svg><svg class="ic s12"><use href="#elements"/></svg>元素</li>
        <li class="l3 leaf"><svg class="ic s12"><use href="#schedule"/></svg>IES-01 墙壁一览表</li>
      </ul>
      <div class="vscroll"><svg class="ic s6 up"><use href="#chev"/></svg><i></i><svg class="ic s6"><use href="#chev"/></svg></div>
    </div>
    <div class="hscroll"><svg class="ic s8 west"><use href="#chev"/></svg><i></i><svg class="ic s8 east"><use href="#chev"/></svg></div>
    <div class="icons actions">
      <button aria-label="保存当前视图"><svg class="ic s12"><use href="#savev"/></svg></button><button class="off" aria-label="新建文件夹"><svg class="ic s12"><use href="#newf"/></svg></button><button class="del" aria-label="删除"><svg class="ic s10"><use href="#x"/></svg></button>
    </div>
    <h2 class="props">属性</h2>
    <div class="viewname"><svg class="ic s8"><use href="#persp"/></svg><span>普通透视图</span></div>
    <button class="settings">设置...</button>
  </aside>
</main>
<footer class="status"><span>点击一个元素或划取一个选择区。按住Ctrl+Shift 在元素和子元素切换选择。</span><div><svg class="ic s10"><use href="#restore"/></svg><b>GRAPHISOFT ID</b></div></footer>
</body>
</html>
```
FILE: styles.css
```css
* { box-sizing: border-box; }
body {
  margin: 0;
  height: 100vh;
  display: grid;
  grid-template-rows: 10px 12px 21px 21px 40px minmax(0, 1fr) 10px;
  grid-template-columns: minmax(0, 1fr);
  overflow: hidden;
  background: #efeff1;
  color: #222;
  font: 8px/12px Lato, "Noto Sans CJK SC", sans-serif;
}
button {
  display: flex;
  align-items: center;
  justify-content: center;
  padding: 0;
  border: 0;
  background: none;
  color: inherit;
  font: inherit;
  white-space: nowrap;
}
h1, h2 { margin: 0; font: inherit; }
.defs { position: absolute; width: 0; height: 0; }
.ic {
  flex: none;
  width: 14px;
  height: 13px;
  fill: none;
  stroke: var(--ink, #4f5256);
  stroke-width: 1.1;
}
.s6 { width: 6px; height: 6px; stroke-width: 3; }
.s8 { width: 8px; height: 8px; stroke-width: 2; }
.s10 { width: 10px; height: 10px; stroke-width: 1.4; }
.s12 { width: 12px; height: 12px; stroke-width: 1.2; }
.s18 { width: 18px; height: 18px; stroke-width: 1; }
.i20 { width: 18px; height: 14px; }
.b { stroke: var(--blue, #3b86e4); }
.bf { fill: #3b86e4; stroke: #3b86e4; }
.off { --ink: #b4b6b9; --blue: #b6c8e0; color: #b0b2b5; }
.on { background: #c0ddf5; }

.titlebar { display: flex; align-items: center; gap: 3px; background: #fff; overflow: hidden; }
.titlebar h1 { flex: 1; line-height: 10px; }
.titlebar > .ic { width: 8px; }
.wincontrols { display: flex; gap: 21px; padding-right: 9px; }
.menubar { display: flex; gap: 6px; padding-left: 1px; background: #fff; }
.doccontrols { --ink: #111; display: flex; gap: 1px; margin-left: auto; }

.toolbar { display: flex; align-items: center; padding-left: 1px; }
.toolbar > button { flex: none; height: 20px; width: 14px; }
.toolbar > .drop { width: 27px; }
.toolbar > .wide { width: 18px; }
.drop { gap: 4px; }
.drop::after {
  content: "";
  border: 3px solid transparent;
  border-top-color: #111;
  border-bottom: 0;
}
.drop.off::after { border-top-color: #888; }
.sep { flex: none; width: 6px; height: 17px; background: linear-gradient(#c3c4c8, #c3c4c8) 2px 0 / 1px 100% no-repeat; }
.row1 .sep { width: 7px; }
.row1 .tight { width: 5px; }
.row2 { border-bottom: 1px solid #c8c9cd; }
.row2 > button { width: 16px; }
.row2 > .drop { width: 28px; }
.row2 > .labelled { width: 44px; gap: 1px; border: 1px solid #a9cdeb; }
.row2 .tiny { width: 4px; }
.layers { flex: none; width: 55px; padding-top: 2px; line-height: 10px; white-space: nowrap; }
.layers div { display: flex; gap: 9px; height: 8px; padding-left: 3px; }
.layers .ic { height: 8px; }
.stack { display: grid; gap: 1px; padding-left: 4px; }

.infobar { display: flex; flex-direction: column; justify-content: space-between; padding: 0 5px 5px; border-bottom: 1px solid #c8c9cd; }
.infobtns { display: flex; align-items: flex-end; gap: 1px; }
.infobtns button { width: 26px; height: 13px; border: 1px solid #dcdde0; background: #e9eaec; }
.infobtns .tall { width: 31px; height: 19px; gap: 6px; border-color: #cfd0d3; }
.infobtns .picked { border-color: #5599d8; background: #cde6fa; }
.infobtns .ic { height: 11px; }
.infobtns .tall .ic { height: 12px; }
.more { gap: 2px; }
.more::after { content: ""; border: 2px solid transparent; border-left: 3px solid #222; border-right: 0; }

.work { display: grid; grid-template-columns: 22px minmax(0, 1fr) 114px; min-height: 0; }
.toolbox {
  display: grid;
  grid-template-rows: 4px 40px 13px minmax(0, 17fr) 12px minmax(0, 7fr) 13px;
  border-right: 1px solid #cfd1d4;
  background: #f0f1f3;
}
.toolbox h2 { background: #d8d9db; overflow: hidden; white-space: nowrap; }
.grip { width: 12px; margin: 1px auto; border-top: 1px solid #d2d3d6; }
.tools { display: grid; grid-auto-rows: minmax(0, 1fr); }
.docs { --ink: #949699; }
.toolbox button { overflow: hidden; }

.center { display: grid; grid-template-rows: 14px minmax(0, 1fr) 13px; min-width: 0; }
.tabs { display: grid; grid-template-columns: 18px repeat(4, minmax(0, 189fr)) minmax(0, 131fr) 33px; background: #d7d8da; }
.tab { justify-content: flex-start; }
.tabs .ic { height: 12px; }
.tabs .s6 { --ink: #111; height: 6px; stroke-width: 4; }
.current { display: flex; justify-content: space-between; padding: 0 5px 0 1px; background: #fff; }
.spare { border-left: 1px solid #cbccd0; }
.end { background: #f0f1f3; }
.canvas { position: relative; background: #e8eaed; min-height: 0; }
.model { display: block; width: 100%; height: 100%; }
.handle { position: absolute; display: grid; place-items: center; background: #dfe1e2; }
.handle::after { content: ""; width: 15px; height: 1px; background: repeating-linear-gradient(90deg, #eab67c 0 3px, transparent 3px 4px); }
.top, .bottom { left: 49%; width: 19px; height: 6px; }
.top { top: 3px; }
.bottom { bottom: 2px; }
.left, .right { top: 48%; width: 9px; height: 20px; }
.left { left: 2px; }
.right { right: 1px; }
.left::after, .right::after { width: 1px; height: 16px; background: repeating-linear-gradient(#eab67c 0 3px, transparent 3px 4px); }
.quickbar { display: grid; grid-template-columns: 79px minmax(0, 1fr); background: #f0f1f3; }
.nav { display: flex; align-items: center; gap: 3px; padding-left: 1px; }
.nav button { width: 12px; }
.options { display: grid; grid-template-columns: repeat(10, minmax(0, 1fr)); }
.options button { display: grid; grid-template-columns: 12px minmax(0, 1fr) 6px; padding: 0 2px 0 4px; border-left: 1px solid #d2d3d6; }
.options button::after { content: ""; border: 2px solid transparent; border-left: 3px solid #222; }
.options .off::after { border-left-color: #aaa; }

.panel {
  display: flex;
  flex-direction: column;
  min-height: 0;
  overflow: hidden;
  border-left: 1px solid #c8c9cd;
  background: #f0f0f1;
}
.panel .off { --ink: #a9abae; }
.panel label { height: 14px; padding-left: 2px; color: #8e8f92; }
.grab { flex: none; width: 45px; height: 2px; margin: 1px 0 4px 36px; background: #d0d1d4; }
.trace { --ink: #8e8f92; display: flex; flex: none; gap: 2px; height: 18px; padding-left: 2px; color: #7d7e81; }
.trace button { width: 19px; background: #c5c5c6; }
.trace .ref { flex: 1; justify-content: flex-start; gap: 2px; padding-left: 2px; }
.icons { display: grid; flex: none; height: 23px; grid-template-columns: repeat(6, 19px); padding-left: 2px; border-bottom: 1px solid #d4d5d8; }
.slide { display: flex; flex: none; align-items: center; height: 18px; padding-left: 20px; gap: 5px; }
.swatch { gap: 5px; width: 19px; height: 18px; background: #c9c9ca; }
.swatch::after { content: ""; border: 2px solid transparent; border-left: 3px solid #999; border-right: 0; }
.edge { width: 7px; margin-left: auto; }
.wheel { width: 9px; height: 9px; border-radius: 50%; background: conic-gradient(#8b83b4, #d18486 30%, #77b58c 60%, #8b83b4); }
.slide input { appearance: none; width: 49px; height: 9px; margin: 0; background: linear-gradient(#d5d5d7, #d5d5d7) 0 4px / 100% 2px no-repeat; }
.slide input::-webkit-slider-thumb { appearance: none; width: 5px; height: 9px; border-radius: 1px; background: #c2c2c4; }
.four { height: 26px; border-top: 1px solid #d4d5d8; }
.second { margin: 1px 0 3px 36px; }
.maptabs { display: flex; flex: none; height: 20px; padding-left: 1px; }
.maptabs button { width: 19px; }
.maptabs .project { width: 28px; margin-right: 12px; background: #e3e3e4; border: 1px solid #d4d4d6; gap: 6px; }
.treebox { display: grid; flex: 1; min-height: 0; grid-template-columns: minmax(0, 1fr) 8px; overflow: hidden; }
.tree { display: grid; grid-auto-rows: 1fr; height: 284px; margin: 0; padding: 0; list-style: none; background: #fff; }
.tree li { display: flex; align-items: center; gap: 2px; padding-left: 3px; white-space: nowrap; overflow: hidden; }
.tree .l1 { padding-left: 9px; }
.tree .l2, .tree .inner { padding-left: 15px; }
.tree .l3 { padding-left: 21px; }
.leaf::before { content: ""; flex: none; width: 8px; }
.tree .selected { background: #d7d7d8; font-weight: bold; color: #111; }
.vscroll { display: flex; flex-direction: column; align-items: center; padding: 3px 0; height: 280px; }
.vscroll i { width: 7px; height: 140px; margin: 2px 0 auto; background: #cbcbcc; }
.up { rotate: 180deg; }
.west { rotate: 90deg; }
.east { rotate: -90deg; }
.hscroll { display: flex; flex: none; align-items: center; gap: 2px; height: 11px; padding: 0 10px 0 1px; }
.hscroll i { width: 67px; height: 10px; background: #cbcbcc; margin-right: auto; }
.actions { grid-template-columns: repeat(3, 19px); height: 26px; padding-left: 59px; border: 0; }
.del { --ink: #f0967e; }
.props { flex: none; height: 13px; padding-left: 4px; background: #d3d4d6; }
.props::before { content: ""; display: inline-block; margin: 0 5px 1px 0; border: 2px solid transparent; border-top: 3px solid #222; border-bottom: 0; }
.viewname { display: flex; flex: none; align-items: center; height: 15px; padding-left: 2px; }
.viewname span { flex: 1; text-align: center; }
.settings { flex: none; height: 13px; margin: 0 0 6px 1px; border: 1px solid #cfcfd1; background: #e3e3e4; }

.status { display: flex; justify-content: space-between; overflow: hidden; white-space: nowrap; background: #f2f2f4; border-top: 1px solid #dcdde0; }
.status div { display: flex; align-items: center; width: 108px; gap: 13px; }
.status b { color: #a6a7aa; font: 9px/12px Lato, sans-serif; }
```
